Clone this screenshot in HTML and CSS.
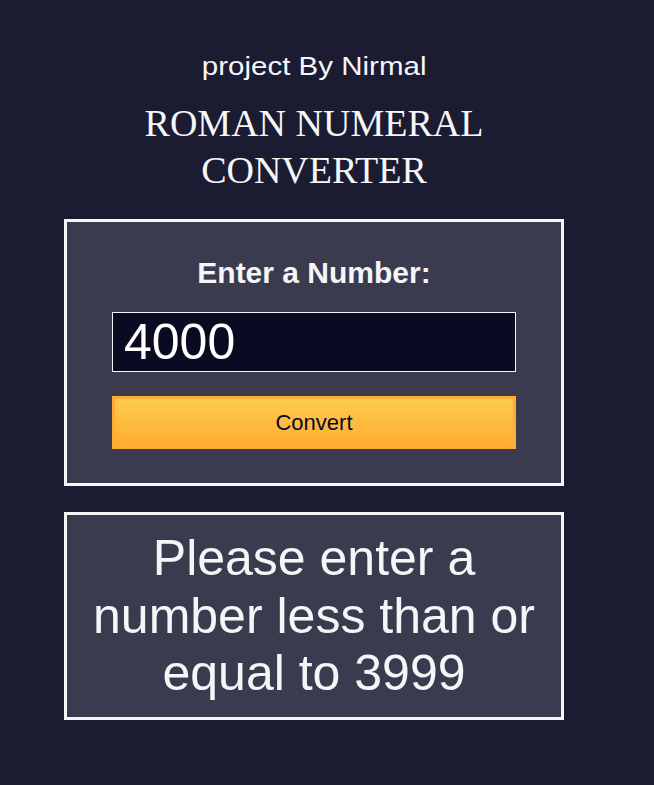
FILE: index.html
```html
<!DOCTYPE html>
<html lang="en">
<head>
<meta charset="utf-8">
<title>Roman Numeral Converter</title>
<link rel="stylesheet" href="styles.css">
</head>
<body>
<main class="page">
  <p class="byline"><span class="byline-text">project By Nirmal</span></p>
  <h1 class="title">ROMAN NUMERAL CONVERTER</h1>
  <form class="card form-card">
    <label class="label" for="number">Enter a Number:</label>
    <input class="number-input" id="number" type="number" value="4000">
    <button class="convert-btn" type="button">Convert</button>
  </form>
  <div class="card output-card">Please enter a number less than or equal to 3999</div>
</main>
</body>
</html>
```
FILE: styles.css
```css
* { box-sizing: border-box; }
html, body {
  margin: 0;
  padding: 0;
  background: #1b1b32;
  color: #f5f6f7;
  font-family: "Liberation Sans", Arial, sans-serif;
}
body { min-height: 785px; }
.page {
  width: 628px;
  display: flex;
  flex-direction: column;
  align-items: center;
  padding-top: 52px;
}
.byline {
  margin: 0 0 20px;
  font-size: 25px;
  line-height: 28px;
  text-align: center;
}
.byline-text {
  display: inline-block;
  transform: scaleX(1.18);
}
.title {
  margin: 0 0 25px;
  width: 380px;
  font-family: "Liberation Serif", "Times New Roman", serif;
  font-weight: normal;
  font-size: 38px;
  line-height: 47px;
  text-align: center;
  color: #f5f6f7;
}
.card {
  width: 500px;
  border: 3px solid #f5f6f7;
  background: #3b3b4f;
}
.form-card {
  display: flex;
  flex-direction: column;
  align-items: center;
  padding: 34px 0 34px;
}
.label {
  font-weight: bold;
  font-size: 30px;
  line-height: 34px;
  margin-bottom: 22px;
}
.number-input {
  width: 404px;
  height: 60px;
  margin: 0 0 24px;
  padding: 0 11px;
  border: 1px solid #f5f6f7;
  background: #0a0a23;
  color: #ffffff;
  font-family: "Liberation Sans", Arial, sans-serif;
  font-size: 50px;
  outline: none;
  -moz-appearance: textfield;
}
.number-input::-webkit-outer-spin-button,
.number-input::-webkit-inner-spin-button {
  -webkit-appearance: none;
  margin: 0;
}
.convert-btn {
  width: 404px;
  height: 53px;
  border: 3px solid #feac32;
  background: linear-gradient(#fecc4c, #ffac33);
  color: #0a0a23;
  font-family: "Liberation Sans", Arial, sans-serif;
  font-size: 22px;
  cursor: pointer;
}
.output-card {
  margin-top: 26px;
  padding: 15px 20px 14px;
  font-size: 50px;
  line-height: 1.15;
  text-align: center;
}
```
